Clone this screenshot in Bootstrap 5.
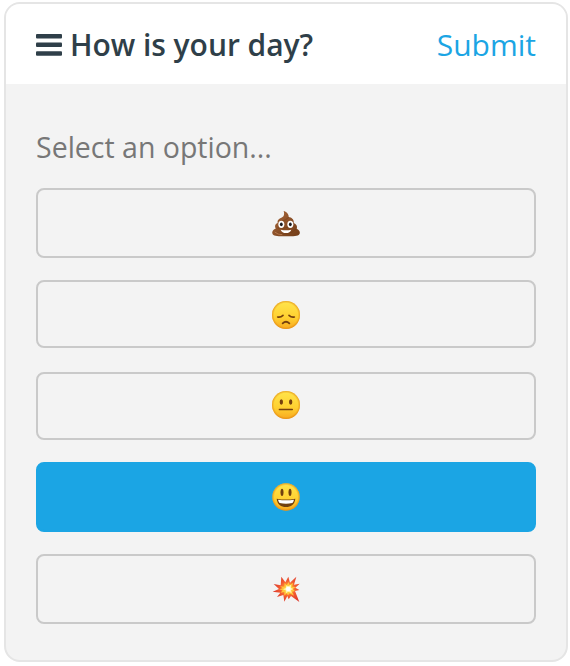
<!DOCTYPE html>
<html lang="en">
<head>
<meta charset="utf-8">
<meta name="viewport" content="width=device-width, initial-scale=1">
<title>How is your day?</title>
<link href="https://cdn.jsdelivr.net/npm/bootstrap@5.3.0/dist/css/bootstrap.min.css" rel="stylesheet">
<style>
body{background:#fff;font-family:"Open Sans","Noto Sans",sans-serif}
.poll{width:564px;height:660px;margin:2px 0 0 4px;border:2px solid #e5e5e5;border-radius:16px;background:#f3f3f3}
.poll-head{height:80px;padding:2px 30px 0;background:#fff}
.poll-title{font-size:30px;line-height:40px;font-weight:600;color:#2f3f49;letter-spacing:-.04px}
.poll-title svg{margin-right:8px}
.poll-submit{font-size:30px;line-height:40px;color:#1ba5e4}
.poll-body{padding:43px 30px 0}
.poll-hint{font-size:28.5px;line-height:40px;color:#777;margin-bottom:21px}
.choices{gap:22px}
.choice{height:70px;border:2px solid #c9c9c9;border-radius:8px;background:#f3f3f3}
.choice.short{height:68px}
.choice.gap-more{margin-bottom:2px}
.choice.sits-low{padding-top:2px!important}
.choice.sits-high{padding-bottom:2px!important}
.choice.chosen{background:#1ba5e4;border-color:#1ba5e4}
</style>
<script src="https://cdn.jsdelivr.net/npm/bootstrap@5.3.0/dist/js/bootstrap.bundle.min.js"></script>
</head>
<body>
<svg width="0" height="0" class="position-absolute" aria-hidden="true">
<defs>
<linearGradient id="face" x1="0" y1="0" x2="0" y2="1"><stop offset="0" stop-color="#ffe54c"/><stop offset=".6" stop-color="#ffd030"/><stop offset="1" stop-color="#f8a820"/></linearGradient>
<radialGradient id="rim"><stop offset=".84" stop-color="#e58a10" stop-opacity="0"/><stop offset="1" stop-color="#dc800c" stop-opacity=".65"/></radialGradient>
<linearGradient id="brown" x1="0" y1="0" x2="1" y2="1"><stop offset="0" stop-color="#a8673a"/><stop offset="1" stop-color="#703b17"/></linearGradient>
<radialGradient id="blast" gradientUnits="userSpaceOnUse" cx="48" cy="41" r="44"><stop offset=".3" stop-color="#ff8a30"/><stop offset=".55" stop-color="#f25a31"/><stop offset="1" stop-color="#dc3a2c"/></radialGradient>
</defs>
</svg>
<main class="poll overflow-hidden">
<header class="poll-head d-flex align-items-center justify-content-between">
<h1 class="poll-title d-flex align-items-center m-0"><svg width="26" height="22" viewBox="0 0 26 22" fill="#2f3f49" aria-hidden="true"><rect width="26" height="4.5" rx="1"/><rect y="8.6" width="26" height="4.5" rx="1"/><rect y="17.3" width="26" height="4.5" rx="1"/></svg><span>How is your day?</span></h1>
<a href="#" class="poll-submit text-decoration-none">Submit</a>
</header>
<section class="poll-body">
<p class="poll-hint">Select an option...</p>
<div class="choices d-flex flex-column">
<button type="button" class="choice sits-low btn w-100 p-0 d-flex align-items-center justify-content-center" aria-label="Awful">
<svg width="28" height="28" viewBox="0 0 84 84"><path d="M35 3C43 5 51 13 50 21C60 22 67 30 65 39C73 42 77 49 74 56C82 59 86 67 82 73C78 79 65 79 42 79S7 79 2 73C-2 66 3 58 11 56C7 48 10 41 17 39C15 31 20 26 28 23C36 20 38 13 35 3Z" fill="url(#brown)"/><path d="M25 34Q44 31 50 21M17 54Q55 57 65 39M15 69Q50 79 74 56" fill="none" stroke="#60300f" stroke-width="2.5" opacity=".4"/><path d="M8 66Q17 74 31 74" fill="none" stroke="#b4764a" stroke-width="3"/><ellipse cx="28" cy="43" rx="9" ry="11" fill="#fff"/><ellipse cx="55" cy="43" rx="9" ry="11" fill="#fff"/><ellipse cx="28" cy="43" rx="4.2" ry="5.8" fill="#1c1c20"/><ellipse cx="55" cy="43" rx="4.2" ry="5.8" fill="#1c1c20"/><path d="M26 59Q42 63 58 59Q54 69 42 69T26 59Z" fill="#fff"/></svg>
</button>
<button type="button" class="choice short gap-more sits-low btn w-100 p-0 d-flex align-items-center justify-content-center" aria-label="Bad">
<svg width="28" height="28" viewBox="0 0 84 84"><circle cx="42" cy="42" r="42" fill="url(#face)"/><circle cx="42" cy="42" r="42" fill="url(#rim)"/><g fill="none" stroke="#76400e" stroke-linecap="round"><path d="M17 48Q26 50 33 43M51 43Q58 50 67 48" stroke-width="5"/><path d="M32 67Q42 57 52 67" stroke-width="5.5"/></g></svg>
</button>
<button type="button" class="choice short sits-high btn w-100 p-0 d-flex align-items-center justify-content-center" aria-label="Okay">
<svg width="28" height="28" viewBox="0 0 84 84"><circle cx="42" cy="42" r="42" fill="url(#face)"/><circle cx="42" cy="42" r="42" fill="url(#rim)"/><g fill="#76400e"><ellipse cx="28" cy="33" rx="5" ry="8"/><ellipse cx="56" cy="33" rx="5" ry="8"/><rect x="20" y="53" width="43" height="4.5" rx="2"/></g></svg>
</button>
<button type="button" class="choice chosen btn w-100 p-0 d-flex align-items-center justify-content-center" aria-label="Good" aria-pressed="true">
<svg width="28" height="28" viewBox="0 0 84 84"><circle cx="42" cy="42" r="41" fill="url(#face)"/><circle cx="42" cy="42" r="41" fill="url(#rim)"/><g fill="#70400f"><ellipse cx="30" cy="28" rx="4.5" ry="11"/><ellipse cx="54" cy="28" rx="4.5" ry="11"/><path d="M14 47Q42 52 70 47C68 64 57 72 42 72S16 64 14 47Z"/></g><path d="M18 50Q42 54 66 50Q64 58 61 60Q42 64 23 60Q20 57 18 50Z" fill="#fff"/></svg>
</button>
<button type="button" class="choice btn w-100 p-0 d-flex align-items-center justify-content-center" aria-label="Explosive">
<svg width="28" height="28" viewBox="0 0 84 84"><path d="M28 5L40 22L49 5L54 23L73 5L66 29L83 26L70 38L82 45L69 48L82 81L57 63L50 73L46 63L37 80L34 60L15 66L25 53L2 50L21 42L5 27L26 31Z" fill="url(#blast)"/><path d="M38 24L44 31L50 21L53 31L63 23L60 35L71 36L62 42L69 48L60 50L66 62L53 55L48 61L44 55L37 62L37 51L26 53L32 46L21 43L32 40L24 34L37 35Z" fill="#ffc83c"/><path d="M43 31L49 34L57 29L57 38L64 42L57 46L59 54L49 50L42 55L41 46L33 43L41 39Z" fill="#fff6a8"/><circle cx="49" cy="42" r="7" fill="#fff"/></svg>
</button>
</div>
</section>
</main>
</body>
</html>
